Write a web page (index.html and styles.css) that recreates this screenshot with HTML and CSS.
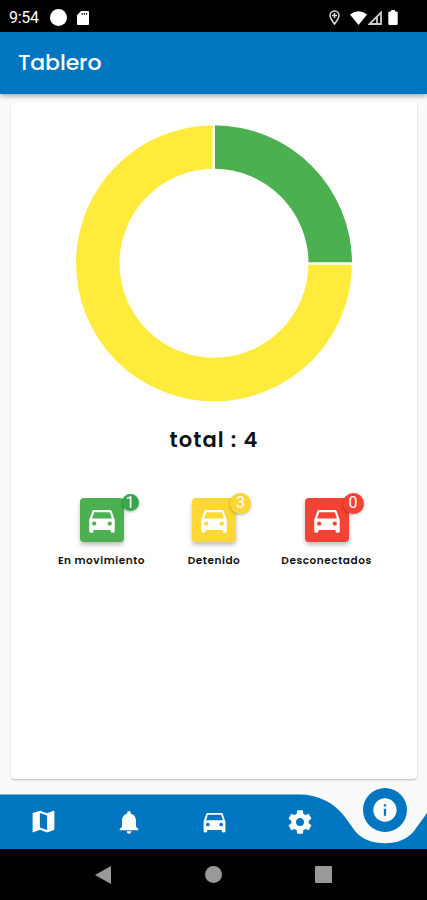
FILE: index.html
```html
<!DOCTYPE html>
<html lang="es">
<head>
    <meta charset="UTF-8">
    <meta name="viewport" content="width=device-width, initial-scale=1.0">
    <title>Tablero</title>
    <link rel="stylesheet" href="styles.css">
</head>
<body>
    <svg width="0" height="0" class="symbols">
        <symbol id="car" viewBox="0 0 24 24">
            <path d="M18.92 6.01C18.72 5.42 18.16 5 17.5 5h-11c-.66 0-1.21.42-1.42 1.01L3 12v8c0 .55.45 1 1 1h1c.55 0 1-.45 1-1v-1h12v1c0 .55.45 1 1 1h1c.55 0 1-.45 1-1v-8l-2.08-5.99zM6.5 16c-.83 0-1.5-.67-1.5-1.5S5.67 13 6.5 13s1.5.67 1.5 1.5S7.33 16 6.5 16zm11 0c-.83 0-1.5-.67-1.5-1.5s.67-1.5 1.5-1.5 1.5.67 1.5 1.5-.67 1.5-1.5 1.5zM5 11l1.5-4.5h11L19 11H5z"/>
        </symbol>
    </svg>

    <div class="status-bar">
        <span class="clock">9:54</span>
        <span class="dot"></span>
        <svg class="sd" width="12" height="14" viewBox="0 0 13 15"><path fill-rule="evenodd" d="M4.5 0H12q1 0 1 1v13q0 1-1 1H1q-1 0-1-1V4.5zM5 2v2h1.2V2zM7.4 2v2h1.2V2zM9.8 2v2H11V2z"/></svg>
        <svg class="pin" width="11" height="15" viewBox="0 0 11 15"><path d="M5.5 14C3.5 11.2 1 8.3 1 5.5a4.5 4.5 0 0 1 9 0C10 8.3 7.5 11.2 5.5 14zM5.5 3v5M3 5.500h5"/></svg>
        <svg class="wifi" width="17" height="14" viewBox="0 0 17 14"><path d="M8.5 14L0 3.5Q8.5-3 17 3.5z"/></svg>
        <svg class="signal" width="14" height="14" viewBox="0 0 14 14"><path d="M13 1.500V13H1.500zM9 6v7"/></svg>
        <svg class="battery" width="10" height="15" viewBox="0 0 10 16"><path d="M3 0h4v1.500h2q1 0 1 1V15q0 1-1 1H1q-1 0-1-1V2.500q0-1 1-1h2z"/></svg>
    </div>

    <header class="app-bar">
        <h1>Tablero</h1>
    </header>

    <main>
        <div class="card">
            <svg class="chart" width="278" height="278" viewBox="-139 -139.3 278 278">
                <path fill="#4caf50" d="M0-138A138 138 0 0 1 138 0H94.500A94.500 94.500 0 0 0 0-94.500z"/>
                <path fill="#ffeb3b" d="M138 0A138 138 0 1 1 0-138V-94.500A94.500 94.500 0 1 0 94.500 0z"/>
                <path stroke="#fff" stroke-width="2.4" d="M-.3-139V-93M93 .2H139"/>
            </svg>
            <p class="total">total : 4</p>
            <div class="states">
                <div class="state moving">
                    <div class="tile"><svg width="34" height="34"><use href="#car"/></svg><span class="badge small">1</span></div>
                    <p>En movimiento</p>
                </div>
                <div class="state stopped">
                    <div class="tile"><svg width="34" height="34"><use href="#car"/></svg><span class="badge">3</span></div>
                    <p>Detenido</p>
                </div>
                <div class="state offline">
                    <div class="tile"><svg width="34" height="34"><use href="#car"/></svg><span class="badge">0</span></div>
                    <p>Desconectados</p>
                </div>
            </div>
        </div>
    </main>

    <nav class="tabs">
        <svg class="tabs-shape" width="427" height="55" viewBox="0 0 427 55"><path d="M0 .5H300C317 .5 334 8 345 23L355 37C362 45.500 373 49.300 385 49.300C397 49.300 407 45.500 414 37L427 19V55H0z"/></svg>
        <a class="tab"><svg width="29" height="29" viewBox="0 0 24 24"><path d="M20.500 3l-.16.03L15 5.100 9 3 3.360 4.900c-.21.07-.36.25-.36.48V20.500c0 .28.22.5.5.5l.16-.03L9 18.900l6 2.100 5.640-1.900c.21-.07.36-.25.36-.48V3.500c0-.28-.22-.5-.5-.5zM15 19l-6-2.110V5l6 2.110V19z"/></svg></a>
        <a class="tab"><svg width="28" height="28" viewBox="0 0 24 24"><path d="M12 22c1.100 0 2-.9 2-2h-4c0 1.100.9 2 2 2zm6-6v-5c0-3.070-1.630-5.640-4.500-6.320V4c0-.83-.67-1.500-1.500-1.500s-1.500.67-1.500 1.500v.68C7.640 5.360 6 7.920 6 11v5l-2 2v1h16v-1l-2-2z"/></svg></a>
        <a class="tab"><svg width="29" height="29"><use href="#car"/></svg></a>
        <a class="tab"><svg width="28" height="28" viewBox="0 0 24 24"><path d="M19.430 12.980c.04-.32.07-.64.07-.98s-.03-.66-.07-.98l2.110-1.650c.19-.15.24-.42.12-.64l-2-3.460c-.12-.22-.39-.3-.61-.22l-2.490 1c-.52-.4-1.080-.73-1.690-.98l-.38-2.650C14.460 2.180 14.250 2 14 2h-4c-.25 0-.46.18-.49.42l-.38 2.650c-.61.25-1.170.59-1.690.98l-2.490-1c-.23-.09-.49 0-.61.22l-2 3.460c-.13.22-.07.49.12.64l2.110 1.650c-.04.32-.07.65-.07.98s.03.66.07.98l-2.110 1.650c-.19.15-.24.42-.12.64l2 3.460c.12.22.39.3.61.22l2.490-1c.52.4 1.080.73 1.690.98l.38 2.650c.03.24.24.42.49.42h4c.25 0 .46-.18.49-.42l.38-2.650c.61-.25 1.170-.59 1.690-.98l2.490 1c.23.09.49 0 .61-.22l2-3.460c.12-.22.07-.49-.12-.64l-2.110-1.650zM12 15.500c-1.930 0-3.500-1.570-3.500-3.500s1.570-3.500 3.500-3.500 3.500 1.570 3.500 3.500-1.570 3.500-3.500 3.500z"/></svg></a>
        <a class="tab active"><svg width="28" height="28" viewBox="0 0 24 24"><path d="M12 2C6.480 2 2 6.480 2 12s4.480 10 10 10 10-4.480 10-10S17.520 2 12 2zm1 15h-2v-6h2v6zm0-8h-2V7h2v2z"/></svg></a>
    </nav>

    <div class="system-nav">
        <svg width="16" height="18" viewBox="0 0 16 18"><path d="M16 0v18L0 9z"/></svg>
        <svg width="17" height="17" viewBox="0 0 17 17"><circle cx="8.500" cy="8.500" r="8.500"/></svg>
        <svg width="17" height="17" viewBox="0 0 17 17"><rect width="17" height="17" rx="1"/></svg>
    </div>
</body>
</html>
```

FILE: styles.css
```css
* {
    box-sizing: border-box;
}
body {
    margin: 0;
    width: 427px;
    height: 900px;
    display: flex;
    flex-direction: column;
    overflow: hidden;
    background: #fafafa;
    font-family: Poppins, Inter, sans-serif;
}
h1, p {
    margin: 0;
}
svg {
    display: block;
    flex: none;
}
.symbols {
    position: absolute;
}

/* status bar */
.status-bar {
    height: 32px;
    flex: none;
    display: flex;
    align-items: center;
    padding: 3px 29px 0 9px;
    background: #000;
    color: #fff;
    fill: #fff;
}
.clock {
    width: 41px;
    font: 400 16px Roboto, sans-serif;
    letter-spacing: -0.3px;
}
.dot {
    width: 17px;
    height: 17px;
    border-radius: 50%;
    background: #fff;
}
.sd {
    margin-left: 10px;
}
.pin {
    margin-left: auto;
    fill: none;
    stroke: #ddd;
    stroke-width: 1.5;
}
.wifi {
    margin-left: 10px;
}
.signal {
    margin-left: 1px;
    fill: none;
    stroke: #ccc;
    stroke-width: 1.8;
}
.battery {
    margin-left: 6px;
}

/* header */
.app-bar {
    position: relative;
    height: 62px;
    flex: none;
    display: flex;
    align-items: center;
    padding: 0 18px 2px;
    background: #0075c0;
    color: #fff;
    box-shadow: 0 2px 5px rgba(0, 0, 0, 0.35);
}
h1 {
    font-size: 22px;
    font-weight: 500;
    letter-spacing: -0.1px;
}

/* card */
main {
    flex: 1;
    padding: 8px 10px 16px 11px;
}
.card {
    height: 100%;
    display: flex;
    flex-direction: column;
    align-items: center;
    padding-top: 22px;
    border-radius: 4px;
    background: #fff;
    box-shadow: 0 1px 2px rgba(0, 0, 0, 0.25);
}
.total {
    margin-top: 25px;
    font-size: 21px;
    line-height: 26px;
    font-weight: 600;
    letter-spacing: 1.1px;
    color: #111;
}
.states {
    display: flex;
    margin-top: 45px;
}
.state {
    width: 112.5px;
    display: flex;
    flex-direction: column;
    align-items: center;
}
.state p {
    margin-top: 12px;
    font-size: 10.5px;
    line-height: 14px;
    font-weight: 600;
    letter-spacing: 0.55px;
    white-space: nowrap;
    color: #111;
}
.tile {
    position: relative;
    width: 44px;
    height: 44px;
    padding: 5px;
    border-radius: 4px;
    fill: #fff;
    box-shadow: 0 3px 4px rgba(0, 0, 0, 0.25);
}
.badge {
    position: absolute;
    top: -5px;
    right: -15px;
    width: 21px;
    height: 21px;
    border-radius: 50%;
    color: #fff;
    font: 16px/20px Roboto, sans-serif;
    text-align: center;
    box-shadow: 0 1px 3px rgba(0, 0, 0, 0.3);
}
.badge.small {
    top: -4px;
    width: 17px;
    height: 17px;
    line-height: 17px;
}
.moving .tile {
    background: #4caf50;
}
.moving .badge {
    background: #36a64a;
}
.stopped .tile, .stopped .badge {
    background: #fdd835;
}
.offline .tile, .offline .badge {
    background: #f44336;
}

/* bottom navigation */
.tabs {
    position: relative;
    height: 54px;
    flex: none;
    display: flex;
    fill: #fff;
}
.tabs-shape {
    position: absolute;
    left: 0;
    top: -1px;
    fill: #0075c0;
}
.tab {
    position: relative;
    flex: 1;
    display: flex;
    align-items: center;
    justify-content: center;
    padding: 0 0 1px 1px;
}
.tab.active {
    flex: none;
    align-self: flex-start;
    width: 44px;
    height: 44px;
    margin: -7px 20px 0 21px;
    padding: 0;
    border-radius: 50%;
    background: #0075c0;
}

/* android buttons */
.system-nav {
    height: 51px;
    flex: none;
    display: flex;
    align-items: center;
    justify-content: space-between;
    padding: 0 95px;
    background: #000;
    fill: #999;
}
```
